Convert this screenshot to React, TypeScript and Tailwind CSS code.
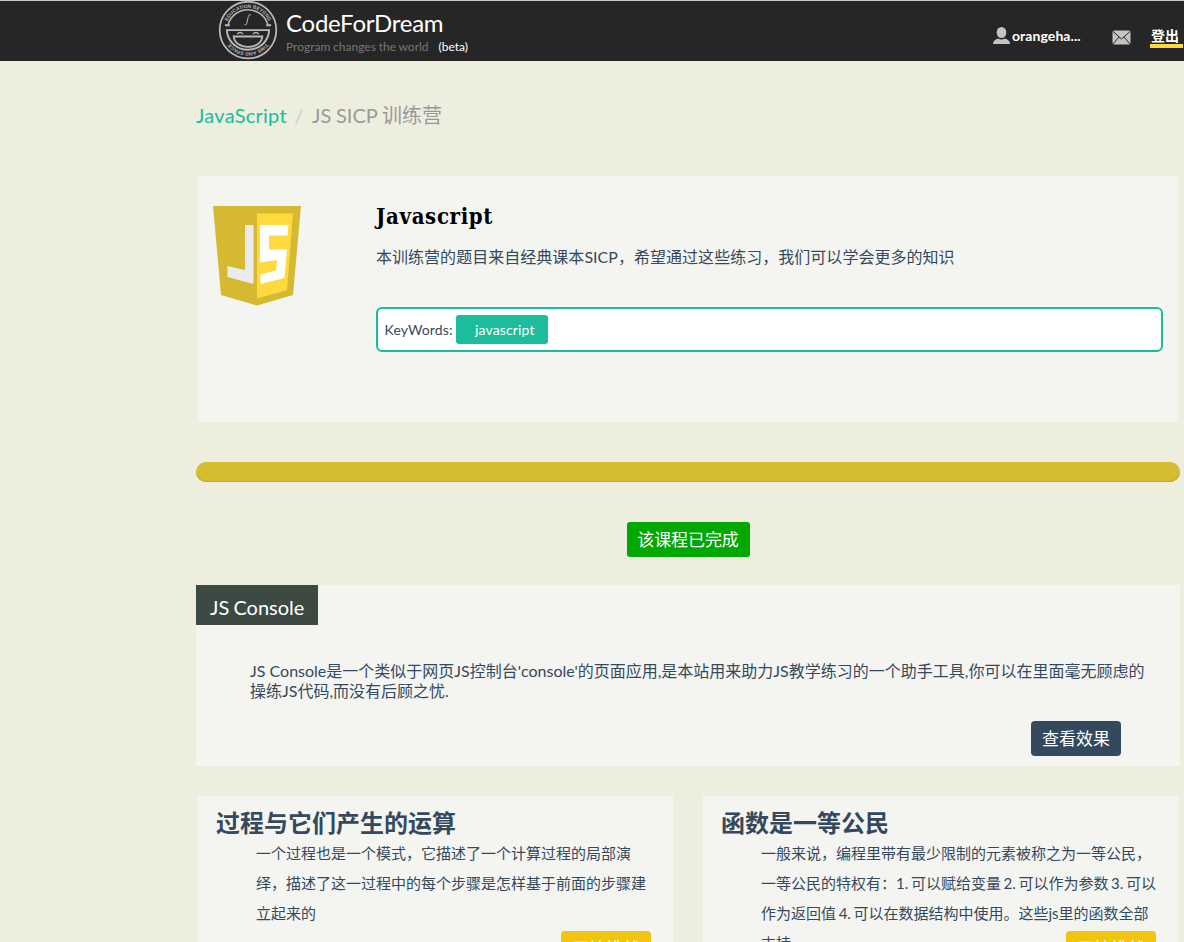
import React from "react";

const cjk = "font-['Lato','Noto_Sans_CJK_SC',sans-serif]";

function Emblem() {
  return (
    <svg className="h-[59px] w-[60px] shrink-0" viewBox="0 0.4 60 60" fill="none" stroke="#b9b9b9">
      <defs>
        <path id="arc" d="M7.400 30A22.600 22.600 0 0 1 52.600 30" />
      </defs>
      <circle cx="30" cy="30" r="28.800" strokeWidth="1.800" />
      <path d="M9.800 24.500A21 21 0 0 1 50.200 24.500" strokeWidth="1.600" />
      <path d="M6.500 25h5M48.500 25h5" strokeWidth="2" />
      <path d="M8.500 30h43C51 41 42 50 30 50S9 41 8.500 30Z" strokeWidth="1.900" />
      <path d="M15.500 36.500h29C44 43 38 47 30 47S16 43 15.500 36.500Z" strokeWidth="1.900" />
      <path d="M19 34q3-3 6 0M35 34q3-3 6 0" strokeWidth="1.400" />
      <path d="M33 14.500q-2-1-2.600 1.500l-1.600 7q-.6 2.500-2.400 1.500" strokeWidth="1" />
      <g fill="#b9b9b9" stroke="none" fontFamily="Liberation Sans" fontWeight="700" fontSize="5">
        <text textAnchor="middle"><textPath href="#arc" startOffset="50%">EDUCATION BEYOND</textPath></text>
        <text textAnchor="middle" transform="rotate(180 30 30)"><textPath href="#arc" startOffset="50%">TIME AND SPACE</textPath></text>
      </g>
    </svg>
  );
}

function JsShield() {
  return (
    <svg className="h-[101px] w-[90px] shrink-0" viewBox="0 0 90 101">
      <path d="M1 1H89L81 90L45 100.500L9 90Z" fill="#d5ba31" />
      <path d="M45 8.500H81L75 85L45 93.500Z" fill="#ffda3e" />
      <path d="M33 20H41.500V79L15.500 72V61L33 65Z" fill="#ebebee" />
      <path d="M48 20H76.500L75.500 30.500H57V44.500H75L72.500 73L48.500 79V69.500L64 65.500L65 55L48 57.500Z" fill="#fff" />
    </svg>
  );
}

function CourseCard({ title, lines }: { title: string; lines: string[] }) {
  return (
    <article className="h-[190px] w-[475px] bg-[#f4f5f0] px-[18px] pt-[9px]">
      <h2 className="h-[33px] text-[24px] leading-[36px] font-bold">{title}</h2>
      <div className="ml-10 h-[93px] text-[15px] leading-[30px] whitespace-nowrap [word-spacing:-1.2px]">
        {lines.map((line) => (
          <p key={line}>{line}</p>
        ))}
      </div>
      <div className="relative flex justify-end pr-[4px]">
        <button className="h-[35px] w-[90px] rounded bg-[#f1c40f] text-[17px] leading-[35px] text-white">开始挑战</button>
      </div>
    </article>
  );
}

export default function App() {
  return (
    <div className={`h-[942px] w-[1184px] overflow-hidden bg-[#edeede] text-[#34495e] ${cjk}`}>
      <header className="flex h-[61px] border-t border-[#c8cbc8] bg-[#262626] pl-[218px] text-white">
        <Emblem />
        <div className="ml-2 w-[250px] pt-[7px]">
          <div className="h-[31px] text-[24px] leading-[30px] tracking-[-0.26px]">CodeForDream</div>
          <div className="flex gap-[10px] text-[12px] leading-[16px]">
            <span className="text-[#777] [word-spacing:-0.3px]">Program changes the world</span>
            <span>(beta)</span>
          </div>
        </div>
        <div className="ml-auto flex pt-[26px]">
          <svg className="h-[17px] w-[17px]" viewBox="0 0 17 17" fill="#c4c4c4">
            <ellipse cx="8.500" cy="5.500" rx="4.800" ry="5.500" />
            <path d="M0 17q0-4 5-5.500q3.500 2 7 0q5 1.500 5 5.500Z" />
          </svg>
          <span className="ml-[2px] w-[100px] text-[14px] leading-[18px] font-bold tracking-[0.08px]">orangeha...</span>
          <svg className="mt-[3px] h-[15px] w-[19px]" viewBox="0 0 19 15">
            <rect x=".5" y=".5" width="18" height="14" rx="1.500" fill="#c4c4c4" />
            <path d="M1 1.500L9.500 9L18 1.500M1 14L7 7M18 14L12 7" stroke="#262626" fill="none" />
          </svg>
          <span className="mr-px ml-[19px] h-[21px] w-[33px] border-b-4 border-[#ffda3e] pl-px text-[14px] leading-[18px] font-bold">登出</span>
        </div>
      </header>

      <main className="ml-[196px] w-[984px]">
        <nav className="flex h-[115px] pt-[39px] text-[20px] leading-[30px]">
          <span className="w-[90px] tracking-[0.25px] text-[#1abc9c]">JavaScript</span>
          <span className="w-[26px] text-center text-[#ccc]">/</span>
          <span className="text-[#999] [word-spacing:-0.4px]">JS SICP 训练营</span>
        </nav>

        <section className="ml-[2px] flex h-[246px] w-[980px] bg-[#f4f5f0] pt-[29px] pl-[14px]">
          <JsShield />
          <div className="ml-[74px] w-[787px]">
            <h1 className="h-[38px] font-['DejaVu_Serif_Condensed','DejaVu_Serif',serif] text-[22px] leading-[23px] font-bold tracking-[0.65px] text-black">Javascript</h1>
            <p className="h-[64px] text-[16px] leading-[28px] tracking-[0.03px]">本训练营的题目来自经典课本SICP，希望通过这些练习，我们可以学会更多的知识</p>
            <div className="flex h-[45px] items-center rounded-md border-2 border-[#1abc9c] bg-white pl-[6.500px] text-[14px] tracking-[0.15px]">
              <span className="w-[71.500px]">KeyWords:</span>
              <span className="h-[29px] w-[92px] rounded-[3px] bg-[#1dbc9c] pl-[19px] leading-[30px] text-white">javascript</span>
            </div>
          </div>
        </section>

        <div className="mt-10 h-5 rounded-[10px] bg-[#d5bc31] shadow-[inset_0_-1px_1px_#bda632]" />

        <div className="mt-10 flex justify-center">
          <div className="h-[35px] w-[123px] rounded-[3px] bg-[#00a800] text-center text-[17px] leading-[35px] tracking-[-0.1px] text-white">该课程已完成</div>
        </div>

        <section className="mt-7 h-[181px] bg-[#f4f5f0]">
          <h2 className="h-10 w-[122px] bg-[#3d4a43] pl-[14px] text-[20px] leading-[45px] text-white [word-spacing:-1px]">JS Console</h2>
          <p className="mt-[36px] ml-[54px] h-[60px] w-[910px] text-[16px] leading-[20px]">
            JS Console是一个类似于网页JS控制台'console'的页面应用,是本站用来助力JS教学练习的一个助手工具,你可以在里面毫无顾虑的
            <br />
            操练JS代码,而没有后顾之忧.
          </p>
          <button className="ml-[835px] block h-[35px] w-[90px] rounded bg-[#34495e] text-[17px] leading-[35px] text-white">查看效果</button>
        </section>

        <div className="mt-[30px] ml-[2px] flex gap-[30px]">
          <CourseCard
            title="过程与它们产生的运算"
            lines={["一个过程也是一个模式，它描述了一个计算过程的局部演", "绎，描述了这一过程中的每个步骤是怎样基于前面的步骤建", "立起来的"]}
          />
          <CourseCard
            title="函数是一等公民"
            lines={["一般来说，编程里带有最少限制的元素被称之为一等公民，", "一等公民的特权有：1. 可以赋给变量 2. 可以作为参数 3. 可以", "作为返回值 4. 可以在数据结构中使用。这些js里的函数全部", "支持"]}
          />
        </div>
      </main>
    </div>
  );
}
